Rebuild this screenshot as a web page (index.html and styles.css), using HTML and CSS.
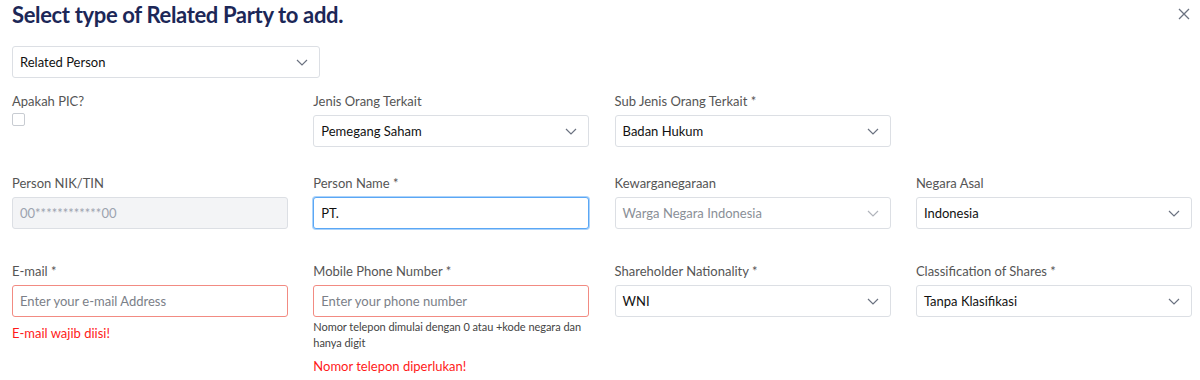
FILE: index.html
```html
<!DOCTYPE html>
<html>
<head>
    <meta charset="UTF-8">
    <title>Add Related Party</title>
    <link rel="stylesheet" href="styles.css">
</head>
<body>
    <div class="modal">
        <div class="modal-header">
            <h2>Select type of Related Party to add.</h2>
            <button class="close-btn" aria-label="Close">
                <svg width="12" height="12" viewBox="0 0 12 12"><path d="M1 1 L11 11 M11 1 L1 11" stroke="#6b7280" stroke-width="1.3" fill="none"/></svg>
            </button>
        </div>

        <div class="type-select">
            <div class="select">
                <span>Related Person</span>
                <svg class="chevron" width="12" height="7" viewBox="0 0 12 7"><path d="M1 1 L6 6 L11 1" stroke="#6b7280" stroke-width="1.2" fill="none"/></svg>
            </div>
        </div>

        <div class="form-grid">
            <div class="form-item">
                <label>Apakah PIC?</label>
                <div class="checkbox"></div>
            </div>
            <div class="form-item">
                <label>Jenis Orang Terkait</label>
                <div class="select">
                    <span>Pemegang Saham</span>
                    <svg class="chevron" width="12" height="7" viewBox="0 0 12 7"><path d="M1 1 L6 6 L11 1" stroke="#6b7280" stroke-width="1.2" fill="none"/></svg>
                </div>
            </div>
            <div class="form-item">
                <label>Sub Jenis Orang Terkait *</label>
                <div class="select">
                    <span>Badan Hukum</span>
                    <svg class="chevron" width="12" height="7" viewBox="0 0 12 7"><path d="M1 1 L6 6 L11 1" stroke="#6b7280" stroke-width="1.2" fill="none"/></svg>
                </div>
            </div>
            <div class="form-item"></div>

            <div class="form-item row-2">
                <label>Person NIK/TIN</label>
                <div class="input disabled">00************00</div>
            </div>
            <div class="form-item row-2">
                <label>Person Name *</label>
                <div class="input focused">PT.</div>
            </div>
            <div class="form-item row-2">
                <label>Kewarganegaraan</label>
                <div class="select disabled">
                    <span>Warga Negara Indonesia</span>
                    <svg class="chevron" width="12" height="7" viewBox="0 0 12 7"><path d="M1 1 L6 6 L11 1" stroke="#b0b4bb" stroke-width="1.2" fill="none"/></svg>
                </div>
            </div>
            <div class="form-item row-2">
                <label>Negara Asal</label>
                <div class="select">
                    <span>Indonesia</span>
                    <svg class="chevron" width="12" height="7" viewBox="0 0 12 7"><path d="M1 1 L6 6 L11 1" stroke="#6b7280" stroke-width="1.2" fill="none"/></svg>
                </div>
            </div>

            <div class="form-item last">
                <label>E-mail *</label>
                <div class="input error placeholder">Enter your e-mail Address</div>
                <div class="error-text">E-mail wajib diisi!</div>
            </div>
            <div class="form-item last">
                <label>Mobile Phone Number *</label>
                <div class="input error placeholder">Enter your phone number</div>
                <div class="help-text">Nomor telepon dimulai dengan 0 atau +kode negara dan hanya digit</div>
                <div class="error-text">Nomor telepon diperlukan!</div>
            </div>
            <div class="form-item last">
                <label>Shareholder Nationality *</label>
                <div class="select">
                    <span>WNI</span>
                    <svg class="chevron" width="12" height="7" viewBox="0 0 12 7"><path d="M1 1 L6 6 L11 1" stroke="#6b7280" stroke-width="1.2" fill="none"/></svg>
                </div>
            </div>
            <div class="form-item last">
                <label>Classification of Shares *</label>
                <div class="select">
                    <span>Tanpa Klasifikasi</span>
                    <svg class="chevron" width="12" height="7" viewBox="0 0 12 7"><path d="M1 1 L6 6 L11 1" stroke="#6b7280" stroke-width="1.2" fill="none"/></svg>
                </div>
            </div>
        </div>
    </div>
</body>
</html>
```

FILE: styles.css
```css
body {
    font-family: Lato, "Open Sans", Arial, sans-serif;
    margin: 0;
    background-color: white;
    color: #222;
}
.modal {
    padding: 0 10px 0 12px;
}
.modal-header {
    display: flex;
    justify-content: space-between;
    align-items: flex-start;
    height: 46px;
}
.modal-header h2 {
    margin: 0;
    padding-top: 1px;
    font-size: 22px;
    font-weight: 700;
    color: #1c2757;
    letter-spacing: -0.35px;
}
.close-btn {
    border: none;
    background: none;
    padding: 0;
    margin-top: 8px;
    cursor: pointer;
    line-height: 0;
}
.type-select {
    width: 308px;
    margin-bottom: 14px;
}
.form-grid {
    display: grid;
    grid-template-columns: repeat(4, 276px);
    column-gap: 25.3px;
}
.form-item {
    display: flex;
    flex-direction: column;
    margin-bottom: 27px;
}
.form-item.row-2 {
    margin-bottom: 33px;
}
.form-item.last {
    margin-bottom: 0;
}
.form-item label {
    font-size: 13px;
    color: #555;
    line-height: 18px;
    margin-bottom: 5px;
}
.select, .input {
    box-sizing: border-box;
    height: 32px;
    border: 1px solid #dcdfe4;
    border-radius: 3px;
    padding: 0 8px 0 7px;
    display: flex;
    align-items: center;
    font-size: 13px;
    color: #111;
    background-color: white;
}
.select {
    justify-content: space-between;
}
.chevron {
    margin-right: 3px;
}
.input.disabled {
    background-color: #f3f4f6;
    color: #9ca3af;
}
.select.disabled span {
    color: #8a8f97;
}
.input.focused {
    border-color: #5aa7f5;
    box-shadow: 0 0 0 1px rgba(90, 167, 245, 0.5);
}
.input.error {
    border-color: #f28b82;
}
.input.placeholder {
    color: #7b8088;
}
.checkbox {
    width: 11px;
    height: 11px;
    border: 1px solid #c8ccd2;
    border-radius: 2px;
    margin-top: -2px;
}
.help-text {
    font-size: 11px;
    letter-spacing: -0.05px;
    color: #444;
    line-height: 16px;
    margin-top: 2px;
}
.error-text {
    font-size: 13px;
    color: #ff1a1a;
    line-height: 18px;
    margin-top: 7px;
}
.help-text + .error-text {
    margin-top: 6px;
}
```
